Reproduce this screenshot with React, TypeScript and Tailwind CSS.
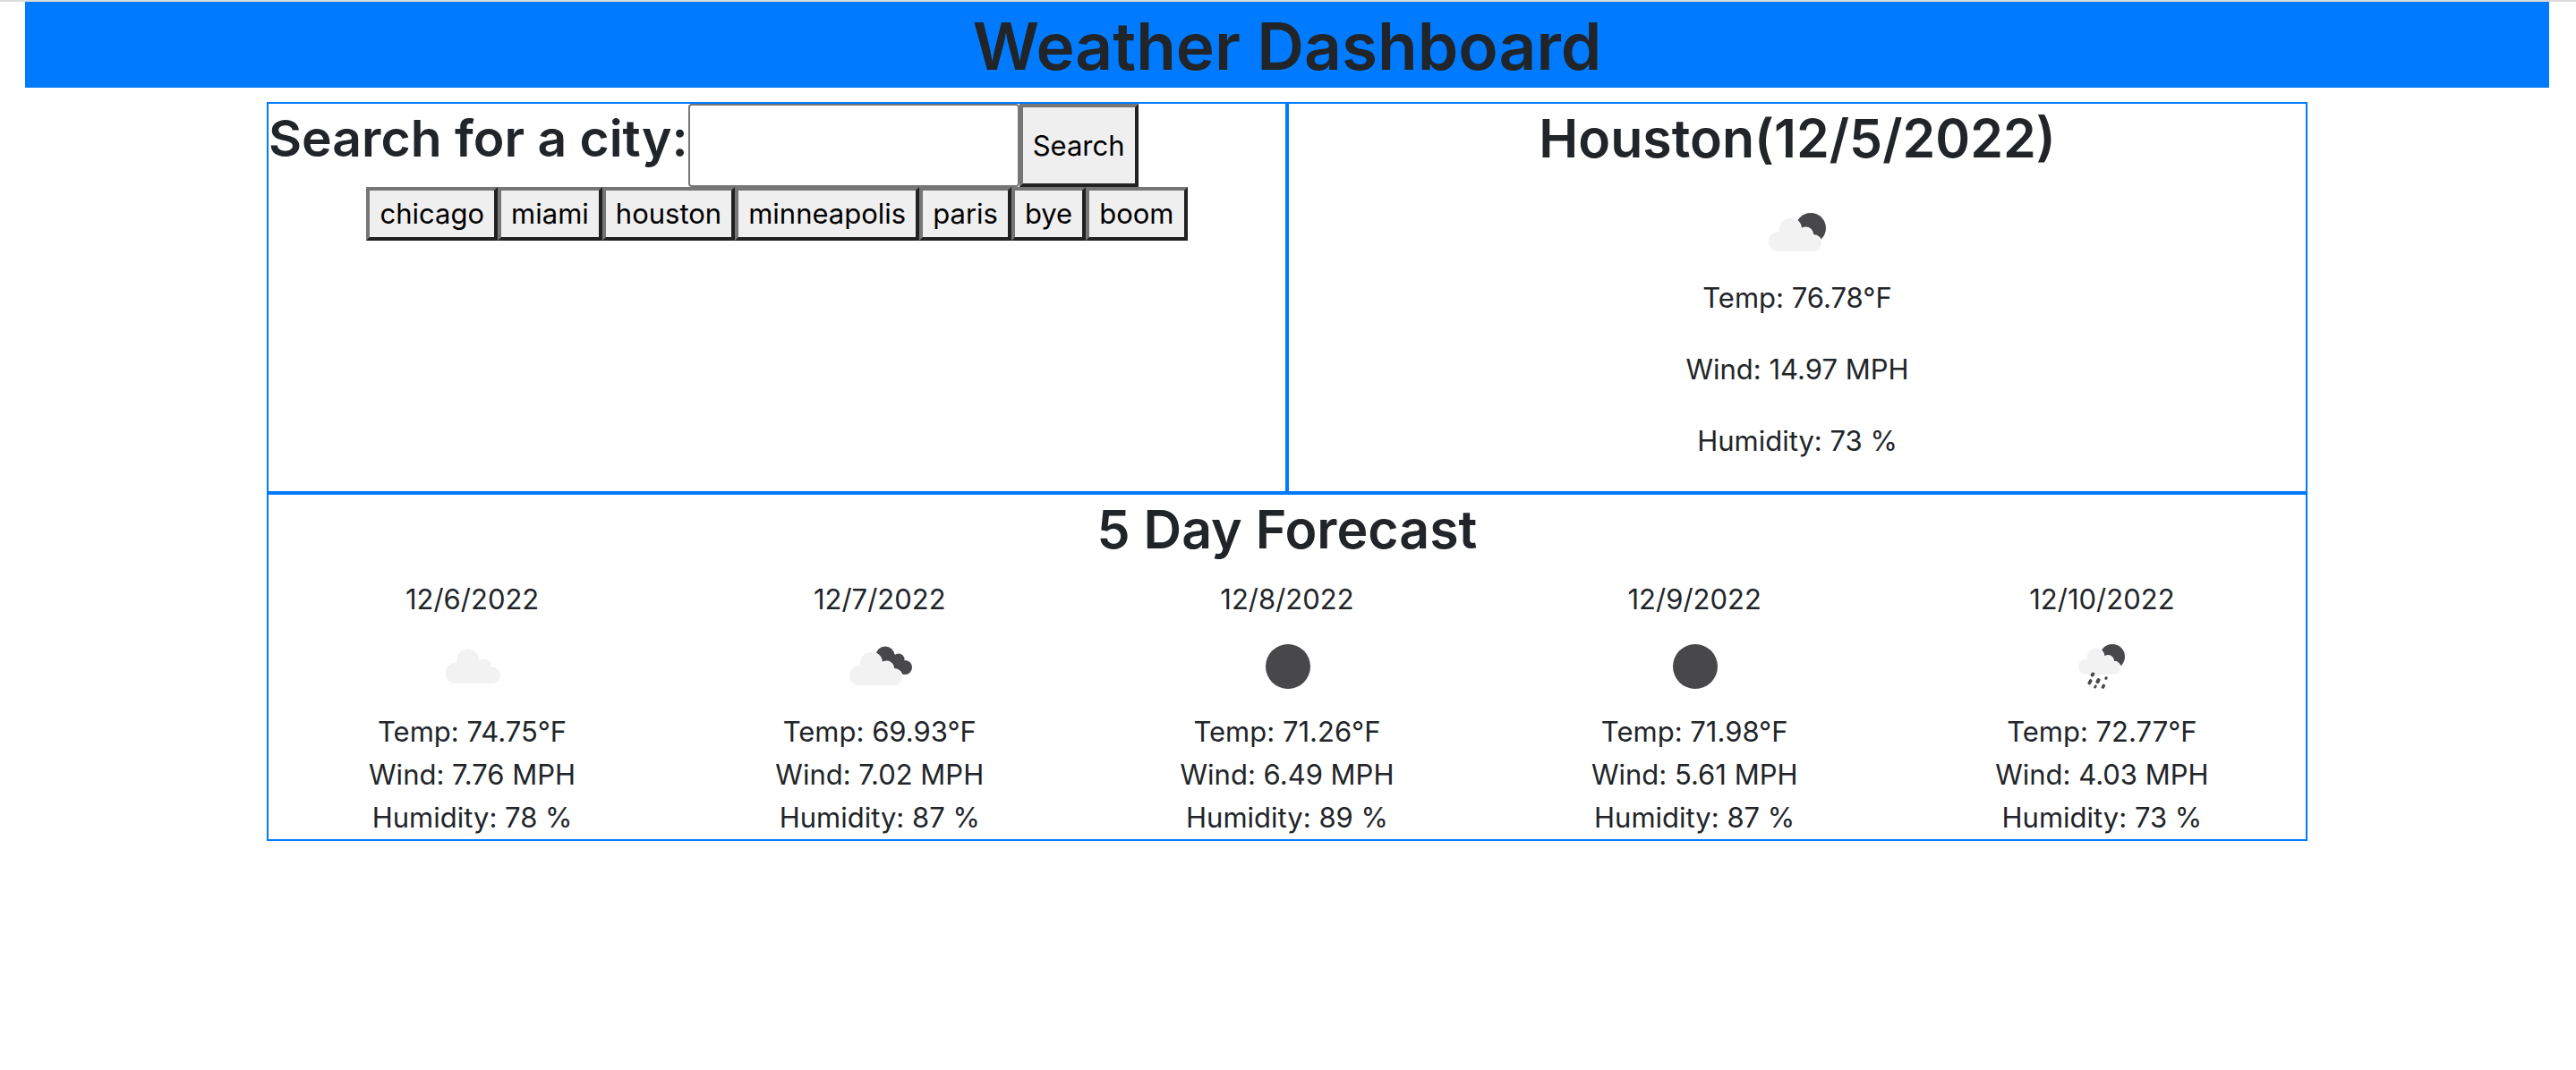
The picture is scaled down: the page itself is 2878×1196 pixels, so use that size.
import type { ReactNode } from "react";

type IconName = "cloud" | "fewClouds" | "brokenClouds" | "clear" | "rain";

interface Day {
  date: string;
  icon: IconName;
  temp: string;
  wind: string;
  humidity: string;
}

const cities = ["chicago", "miami", "houston", "minneapolis", "paris", "bye", "boom"];

const forecast: Day[] = [
  { date: "12/6/2022", icon: "cloud", temp: "74.75", wind: "7.76", humidity: "78" },
  { date: "12/7/2022", icon: "brokenClouds", temp: "69.93", wind: "7.02", humidity: "87" },
  { date: "12/8/2022", icon: "clear", temp: "71.26", wind: "6.49", humidity: "89" },
  { date: "12/9/2022", icon: "clear", temp: "71.98", wind: "5.61", humidity: "87" },
  { date: "12/10/2022", icon: "rain", temp: "72.77", wind: "4.03", humidity: "73" },
];

const puffs = (
  <>
    <circle cx="29" cy="61" r="11" />
    <circle cx="42" cy="47" r="12" />
    <circle cx="59.500" cy="53" r="7.500" />
    <circle cx="68" cy="63" r="9" />
    <path d="M29 72V60L40 50L60 52L68 60V72Z" />
  </>
);

function Cloud({ transform, outlined = true }: { transform?: string; outlined?: boolean }) {
  return (
    <g transform={transform}>
      {outlined && (
        <g fill="#fff" stroke="#fff" strokeWidth="2">
          {puffs}
        </g>
      )}
      <g fill="#f2f2f2">{puffs}</g>
    </g>
  );
}

const drawings: Record<IconName, ReactNode> = {
  cloud: <Cloud transform="translate(1 -5) scale(1.040)" outlined={false} />,
  fewClouds: (
    <>
      <circle cx="65" cy="46" r="17" fill="#48484a" />
      <Cloud />
    </>
  ),
  brokenClouds: (
    <>
      <g fill="#48484a">
        <circle cx="56" cy="39" r="10.500" />
        <circle cx="71" cy="43" r="6.500" />
        <circle cx="78" cy="52" r="8" />
        <path d="M60 33L71 40L80 48L76 60L52 48Z" />
      </g>
      <Cloud transform="translate(-2 0)" />
    </>
  ),
  clear: <circle cx="51" cy="51" r="25" fill="#48484a" />,
  rain: (
    <>
      <circle cx="62" cy="40" r="14" fill="#48484a" />
      <Cloud transform="translate(9.600 2.400) scale(.8)" />
      <g stroke="#48484a" strokeLinecap="round">
        <path d="M40.300 59.500L39.700 60.500M46.500 66L45.500 68" strokeWidth="4" />
        <path d="M37.700 67L36.300 69.500M52.300 72.500L51.500 74" strokeWidth="3.600" />
        <path d="M55.200 63.700L54.800 64.300M43.200 73L42.800 74" strokeWidth="3" />
      </g>
    </>
  ),
};

function WeatherIcon({ name }: { name: IconName }) {
  return (
    <svg viewBox="0 0 100 100" className="mx-auto block size-[100px]" aria-hidden="true">
      {drawings[name]}
    </svg>
  );
}

const outset =
  "shrink-0 border-4 border-t-[#767676] border-l-[#767676] border-r-[#212121] border-b-[#212121] bg-[#efefef] px-[11px] text-[31px] leading-[48px] text-black";

export default function App() {
  return (
    <div className="min-h-screen border-t-2 border-[#dcdcdc] bg-white pr-[30px] pl-[28px] font-['Inter',sans-serif] text-[31px] leading-[48px] text-[#212529]">
      <header className="mb-4 bg-[#007bff] text-center">
        <h1 className="pt-1 text-[73px] leading-[92px] font-semibold">Weather Dashboard</h1>
      </header>

      <main className="mx-auto max-w-[2280px]">
        <div className="grid grid-cols-2">
          <section className="border-2 border-[#007bff]">
            <form className="flex" onSubmit={(e) => e.preventDefault()}>
              <label htmlFor="city" className="mb-4 text-[57px] leading-[77px] font-semibold whitespace-nowrap">
                Search for a city:
              </label>
              <input
                id="city"
                type="text"
                className="w-[370px] rounded-[4px] border-2 border-[#767676] bg-white px-1 text-black"
              />
              <button type="submit" className={outset}>
                Search
              </button>
            </form>
            <div className="flex justify-center">
              {cities.map((city) => (
                <button key={city} type="button" className={`${outset} py-[2px]`}>
                  {city}
                </button>
              ))}
            </div>
          </section>

          <section className="border-2 border-[#007bff] text-center">
            <h2 className="mb-4 text-[59px] leading-[77px] font-semibold">Houston(12/5/2022)</h2>
            <WeatherIcon name="fewClouds" />
            <p className="mb-8">Temp: 76.78°F</p>
            <p className="mb-8">Wind: 14.97 MPH</p>
            <p className="mb-8">Humidity: 73 %</p>
          </section>
        </div>

        <section className="border-2 border-[#007bff] text-center">
          <h2 className="mb-4 text-[59px] leading-[77px] font-semibold">5 Day Forecast</h2>
          <div className="grid grid-cols-5">
            {forecast.map((day) => (
              <article key={day.date}>
                <h3>{day.date}</h3>
                <WeatherIcon name={day.icon} />
                <p>Temp: {day.temp}°F</p>
                <p>Wind: {day.wind} MPH</p>
                <p>Humidity: {day.humidity} %</p>
              </article>
            ))}
          </div>
        </section>
      </main>
    </div>
  );
}
